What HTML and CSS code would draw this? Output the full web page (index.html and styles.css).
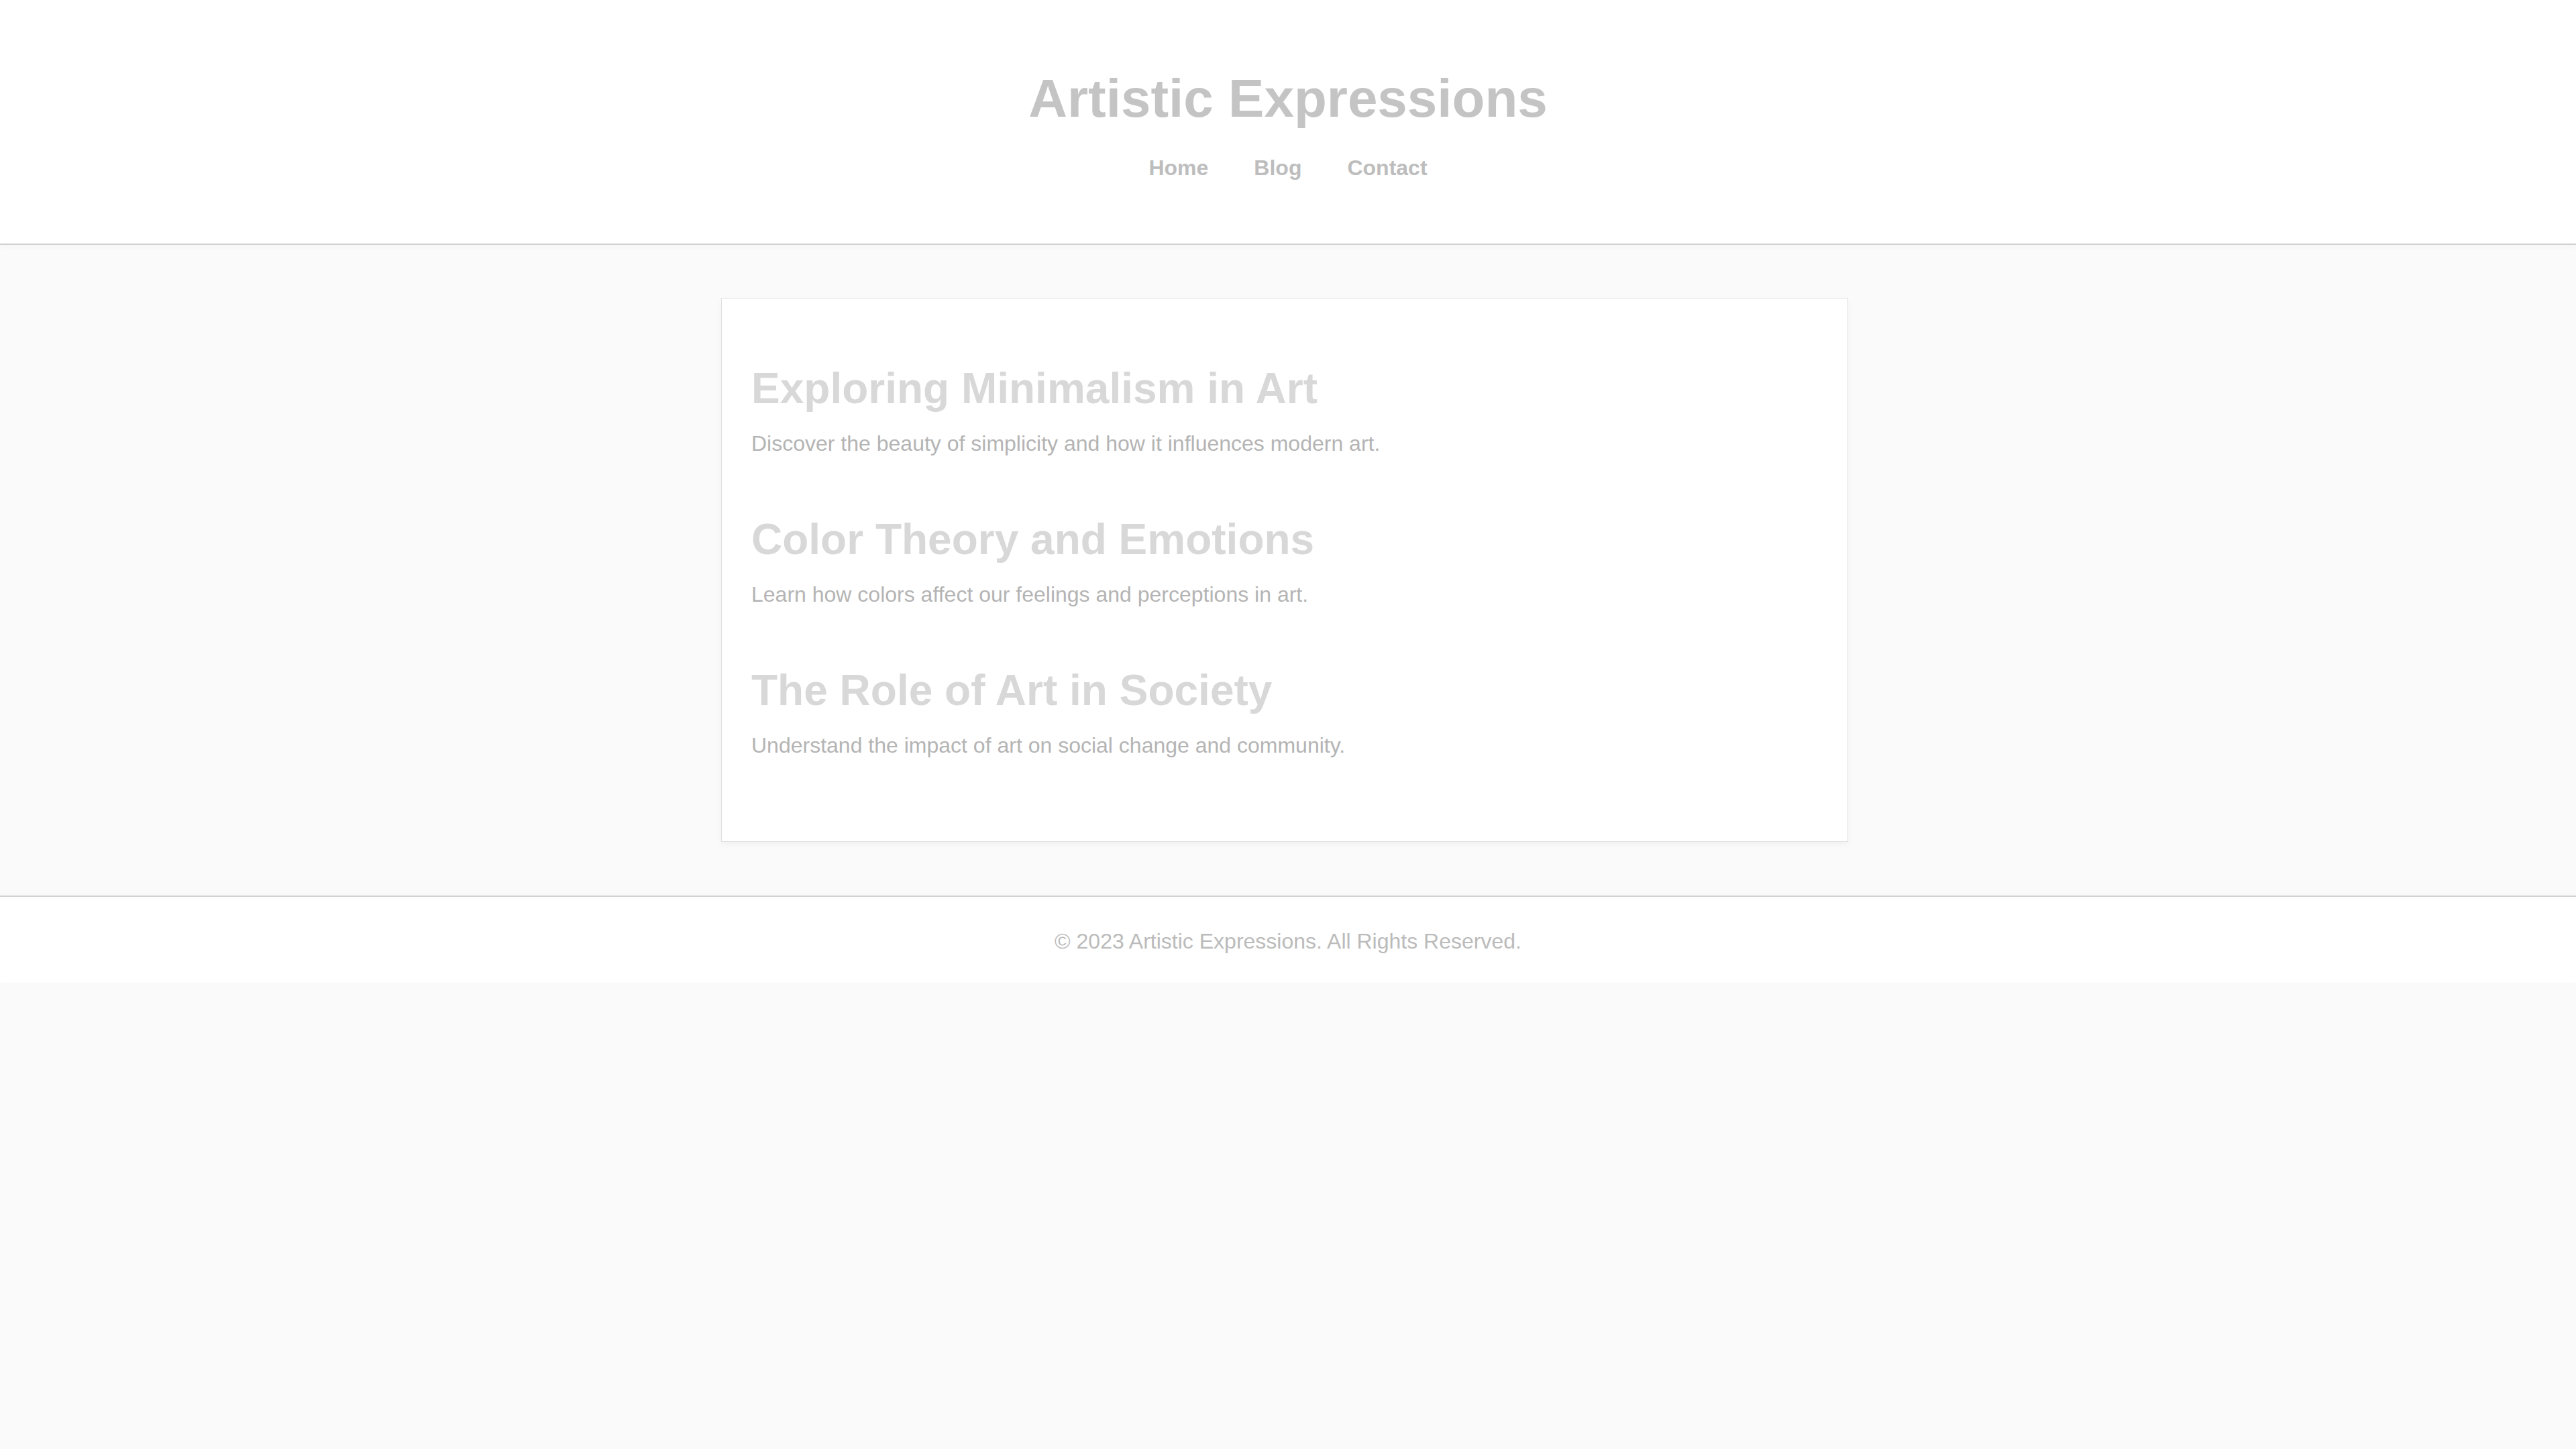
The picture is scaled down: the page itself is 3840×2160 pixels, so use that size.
FILE: index.html
```html
<!DOCTYPE html>
<html lang="en">
<head>
<meta charset="utf-8">
<title>Artistic Expressions</title>
<link rel="stylesheet" href="styles.css">
</head>
<body>
<header class="site-header">
  <h1 class="site-title">Artistic Expressions</h1>
  <nav class="site-nav">
    <a href="#" class="nav-link">Home</a>
    <a href="#" class="nav-link">Blog</a>
    <a href="#" class="nav-link">Contact</a>
  </nav>
</header>
<main class="content">
  <section class="card">
    <article class="post">
      <h2 class="post-title">Exploring Minimalism in Art</h2>
      <p class="post-text">Discover the beauty of simplicity and how it influences modern art.</p>
    </article>
    <article class="post">
      <h2 class="post-title">Color Theory and Emotions</h2>
      <p class="post-text">Learn how colors affect our feelings and perceptions in art.</p>
    </article>
    <article class="post">
      <h2 class="post-title">The Role of Art in Society</h2>
      <p class="post-text">Understand the impact of art on social change and community.</p>
    </article>
  </section>
</main>
<footer class="site-footer">
  <p class="footer-text">© 2023 Artistic Expressions. All Rights Reserved.</p>
</footer>
</body>
</html>
```

FILE: styles.css
```css
html, body {
  margin: 0;
  padding: 0;
}

body {
  background: #fafafa;
  font-family: "Liberation Sans", Arial, sans-serif;
  min-height: 2160px;
}

.site-header {
  background: #ffffff;
  text-align: center;
  padding: 101px 0 94px;
  border-bottom: 2px solid #d2d2d2;
  box-shadow: 0 2px 10px rgba(0, 0, 0, 0.03);
}

.site-title {
  margin: 0;
  font-size: 80px;
  font-weight: bold;
  line-height: normal;
  color: #c4c4c4;
}

.site-nav {
  margin-top: 39px;
  display: flex;
  justify-content: center;
  gap: 68px;
}

.nav-link {
  font-size: 32px;
  font-weight: bold;
  line-height: normal;
  color: #bdbdbd;
  text-decoration: none;
}

.content {
  padding: 79px 0 80px;
}

.card {
  box-sizing: border-box;
  width: 1680px;
  margin-left: calc(50% - 845px);
  background: #ffffff;
  border: 1px solid #e0e0e0;
  box-shadow: 0 4px 10px rgba(0, 0, 0, 0.04);
  padding: 97px 44px 124px;
}

.post + .post {
  margin-top: 87px;
}

.post-title {
  margin: 0 0 27px;
  font-size: 64px;
  font-weight: bold;
  line-height: normal;
  color: #d8d8d8;
}

.post-text {
  margin: 0;
  font-size: 32px;
  line-height: normal;
  color: #b4b4b4;
}

.site-footer {
  background: #ffffff;
  border-top: 2px solid #d2d2d2;
  padding: 48px 0 43px;
  text-align: center;
  box-shadow: 0 -2px 8px rgba(0, 0, 0, 0.02);
}

.footer-text {
  margin: 0;
  font-size: 32px;
  line-height: normal;
  color: #bbbbbb;
}
```
